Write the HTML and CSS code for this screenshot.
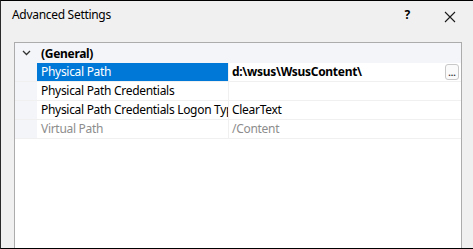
FILE: index.html
```html
<!DOCTYPE html>
<html lang="en">
<head>
    <meta charset="UTF-8">
    <title>Advanced Settings</title>
    <link rel="stylesheet" href="styles.css">
</head>
<body>
    <div class="window">
        <div class="titlebar">
            <span class="title">Advanced Settings</span>
            <span class="help">?</span>
            <span class="close">
                <svg width="12" height="12" viewBox="0 0 12 12"><path d="M1 1 L11 11 M11 1 L1 11" stroke="#1a1a1a" stroke-width="1.1" fill="none"/></svg>
            </span>
        </div>
        <div class="content">
            <div class="grid">
                <div class="category">
                    <div class="margin">
                        <svg width="9" height="6" viewBox="0 0 9 6"><path d="M1 1 L4.5 4.5 L8 1" stroke="#333" stroke-width="1.3" fill="none"/></svg>
                    </div>
                    <div class="cat-name">(General)</div>
                </div>
                <div class="row selected">
                    <div class="margin"></div>
                    <div class="name">Physical Path</div>
                    <div class="value bold">d:\wsus\WsusContent\<span class="dots">...</span></div>
                </div>
                <div class="row">
                    <div class="margin"></div>
                    <div class="name">Physical Path Credentials</div>
                    <div class="value"></div>
                </div>
                <div class="row">
                    <div class="margin"></div>
                    <div class="name">Physical Path Credentials Logon Type</div>
                    <div class="value">ClearText</div>
                </div>
                <div class="row disabled">
                    <div class="margin"></div>
                    <div class="name">Virtual Path</div>
                    <div class="value">/Content</div>
                </div>
            </div>
        </div>
    </div>
</body>
</html>
```

FILE: styles.css
```css
body {
    margin: 0;
    width: 473px;
    height: 249px;
    overflow: hidden;
    background-color: #f0f0f0;
    font-family: "Noto Sans", "Open Sans", sans-serif;
    font-size: 12px;
    letter-spacing: -0.3px;
    color: #000;
}

.window {
    box-sizing: border-box;
    height: 249px;
    border-top: 1px solid #000;
    border-left: 1px solid #2a2a2a;
    border-bottom: 1px solid #000;
    display: flex;
    flex-direction: column;
}

.titlebar {
    height: 41px;
    display: flex;
    align-items: flex-start;
    padding-top: 5px;
    box-sizing: border-box;
}

.title {
    padding-left: 11px;
    flex: 1;
}

.help {
    font-weight: bold;
    margin-right: 34px;
}

.close {
    margin-right: 17px;
    padding-top: 4px;
}

.content {
    flex: 1;
    margin-left: 13px;
    margin-right: 11px;
    border: 1px solid #acacac;
    border-bottom: none;
    background-color: #fff;
}

.grid {
    display: flex;
    flex-direction: column;
}

.category {
    display: flex;
    height: 20px;
    align-items: center;
    background-color: #f4f5f9;
    font-weight: bold;
}

.margin {
    width: 22px;
    flex-shrink: 0;
    display: flex;
    justify-content: center;
    align-items: center;
    background-color: #f4f5f9;
    align-self: stretch;
}

.cat-name {
    padding-left: 4px;
}

.row {
    display: flex;
    height: 19px;
    box-sizing: border-box;
    border-bottom: 1px solid #f0f0f0;
    line-height: 18px;
}

.name {
    width: 192px;
    box-sizing: border-box;
    padding-left: 4px;
    white-space: nowrap;
    overflow: hidden;
    border-right: 1px solid #f0f0f0;
}

.value {
    flex: 1;
    padding-left: 3px;
    white-space: nowrap;
    display: flex;
    align-items: center;
}

.bold {
    font-weight: bold;
}

.selected .name {
    background-color: #0078d7;
    color: #fff;
}

.disabled {
    color: #8d8d8d;
}

.dots {
    margin-left: auto;
    margin-right: 2px;
    width: 12px;
    height: 14px;
    border: 1px solid #c8c8c8;
    border-radius: 3px;
    font-size: 9px;
    line-height: 16px;
    letter-spacing: 0;
    text-align: center;
    color: #333;
    background-color: #fafafa;
}
```
